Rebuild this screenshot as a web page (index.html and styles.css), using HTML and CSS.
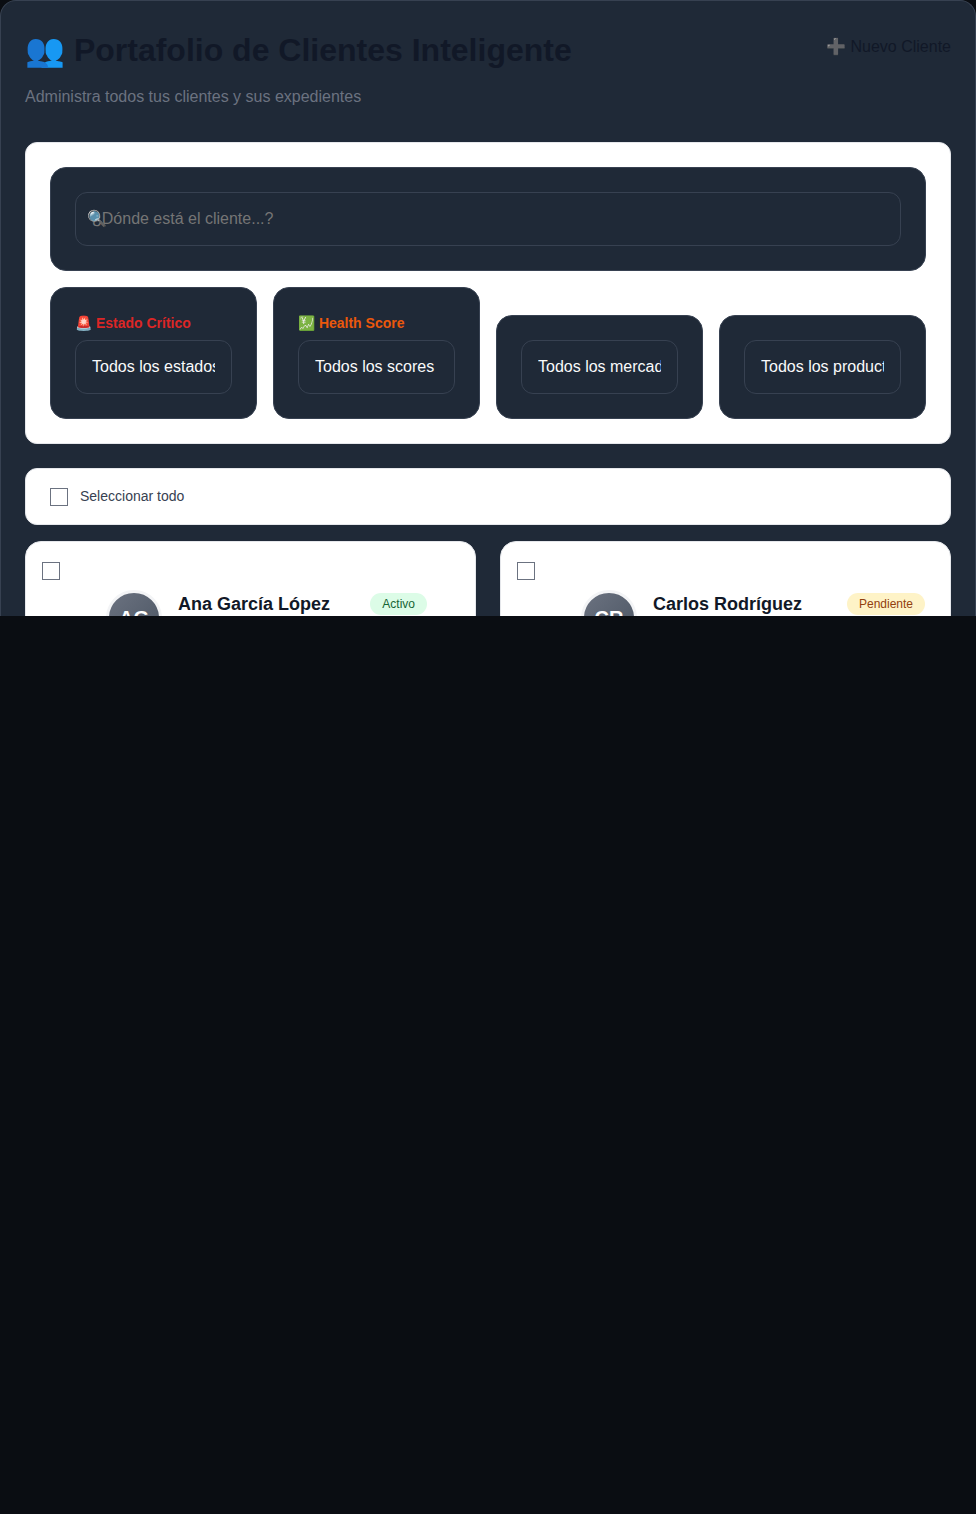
FILE: index.html
```html
<!DOCTYPE html>
<html lang="es">
<head>
<meta charset="utf-8">
<meta name="viewport" content="width=device-width, initial-scale=1">
<title>Portafolio de Clientes</title>
<link rel="stylesheet" href="styles.css">
</head>
<body>
<main class="panel">
  <header class="page-header">
    <div>
      <h1 class="page-title">👥 Portafolio de Clientes Inteligente</h1>
      <p class="page-subtitle">Administra todos tus clientes y sus expedientes</p>
    </div>
    <button class="new-client" type="button">➕ Nuevo Cliente</button>
  </header>

  <section class="surface filters">
    <div class="tile">
      <div class="search">
        <input class="field" type="search" aria-label="Buscar cliente" placeholder="¿Dónde está el cliente...?">
        <span class="search-icon" aria-hidden="true">🔍</span>
      </div>
    </div>
    <div class="filter-grid">
      <div class="tile">
        <label class="filter-label critical" for="estado">🚨 Estado Crítico</label>
        <select class="field select" id="estado"><option>Todos los estados</option></select>
      </div>
      <div class="tile">
        <label class="filter-label health" for="score">💹 Health Score</label>
        <select class="field select" id="score"><option>Todos los scores</option></select>
      </div>
      <div class="tile">
        <select class="field select" aria-label="Mercado"><option>Todos los mercados</option></select>
      </div>
      <div class="tile">
        <select class="field select" aria-label="Producto"><option>Todos los productos</option></select>
      </div>
    </div>
  </section>

  <div class="surface select-bar">
    <input class="check" type="checkbox" id="todos">
    <label for="todos">Seleccionar todo</label>
  </div>

  <section class="client-grid">
    <article class="client-card">
      <input class="check" type="checkbox" aria-label="Seleccionar Ana García López">
      <div class="client">
        <div class="avatar">AG</div>
        <div class="client-heading compact">
          <h2 class="client-name">Ana García López</h2>
          <span class="badge active">Activo</span>
        </div>
      </div>
    </article>
    <article class="client-card">
      <input class="check" type="checkbox" aria-label="Seleccionar Carlos Rodríguez">
      <div class="client">
        <div class="avatar">CR</div>
        <div class="client-heading">
          <h2 class="client-name">Carlos Rodríguez</h2>
          <span class="badge pending">Pendiente</span>
        </div>
      </div>
    </article>
  </section>
</main>
</body>
</html>
```
FILE: styles.css
```css
* {
  box-sizing: border-box;
}

body {
  margin: 0;
  background: #0a0d12;
  color: #111827;
  font-family: "Liberation Sans", Arial, sans-serif;
  font-size: 16px;
}

h1, h2, p {
  margin: 0;
}

.panel {
  padding: 24px 24px 0;
  background: #1f2937;
  border: 1px solid #374151;
  border-bottom: 0;
  border-radius: 16px 16px 0 0;
}

.page-header {
  display: flex;
  justify-content: space-between;
  align-items: flex-start;
  margin-bottom: 32px;
}

.page-title {
  margin-bottom: 8px;
  font-size: 32px;
  line-height: 51px;
}

.page-subtitle {
  color: #6b7280;
  line-height: 26px;
}

.new-client {
  padding: 12px 0;
  border: 0;
  background: none;
  color: #111827;
  font: inherit;
  cursor: pointer;
}

.surface {
  background: #fff;
  border: 1px solid #e5e7eb;
  border-radius: 12px;
}

.filters {
  display: grid;
  gap: 16px;
  padding: 24px;
  margin-bottom: 24px;
}

.filter-grid {
  display: grid;
  grid-template-columns: repeat(4, minmax(0, 1fr));
  align-items: end;
  gap: 16px;
}

.tile {
  padding: 24px;
  background: #1f2937;
  border: 1px solid #374151;
  border-radius: 16px;
}

.search {
  position: relative;
}

.search-icon {
  position: absolute;
  top: 50%;
  left: 12px;
  transform: translateY(-50%);
  line-height: 26px;
  color: #9ca3af;
  pointer-events: none;
}

.field {
  display: block;
  width: 100%;
  height: 54px;
  padding: 16px;
  appearance: none;
  background: transparent;
  border: 1px solid #374151;
  border-radius: 12px;
  color: #f9fafb;
  font: inherit;
}

.select {
  padding: 15px 16px 17px;
}

.field::placeholder {
  color: #757575;
}

.filter-label {
  display: block;
  margin-bottom: 6px;
  font-size: 14px;
  font-weight: 700;
  line-height: 22px;
}

.critical {
  color: #dc2626;
}

.health {
  color: #ea580c;
}

.select-bar {
  display: flex;
  align-items: center;
  gap: 12px;
  padding: 16px 24px;
  margin-bottom: 16px;
  color: #374151;
  font-size: 14px;
  line-height: 23px;
}

.check {
  flex: none;
  width: 18px;
  height: 18px;
  margin: 0;
  appearance: none;
  background: #fff;
  border: 1px solid #6b7280;
}

.check:checked {
  background: #6b7280;
}

.client-grid {
  display: grid;
  grid-template-columns: repeat(2, minmax(0, 1fr));
  gap: 24px;
  max-height: 75px;
  overflow: hidden;
}

.client-card {
  display: flex;
  align-items: flex-start;
  gap: 46px;
  padding: 20px 25px 24px 16px;
  background: #fff;
  border: 1px solid #e5e7eb;
  border-radius: 16px;
}

.client {
  display: flex;
  flex: 1;
  align-items: flex-start;
  gap: 16px;
  padding-top: 28px;
}

.avatar {
  display: grid;
  place-items: center;
  flex: none;
  width: 56px;
  height: 56px;
  border: 3px solid #f3f4f6;
  border-radius: 50%;
  background: linear-gradient(135deg, #6b7280, #4b5563);
  color: #fff;
  font-size: 20px;
  font-weight: 700;
}

.client-heading {
  display: flex;
  flex: 1;
  justify-content: space-between;
  align-items: center;
  padding-top: 3px;
}

.compact {
  max-width: 249px;
}

.client-name {
  font-size: 18px;
  line-height: 22px;
}

.badge {
  padding: 4px 12px;
  border-radius: 12px;
  font-size: 12px;
  line-height: 14px;
}

.active {
  background: #dcfce7;
  color: #166534;
}

.pending {
  background: #fef3c7;
  color: #92400e;
}
```
